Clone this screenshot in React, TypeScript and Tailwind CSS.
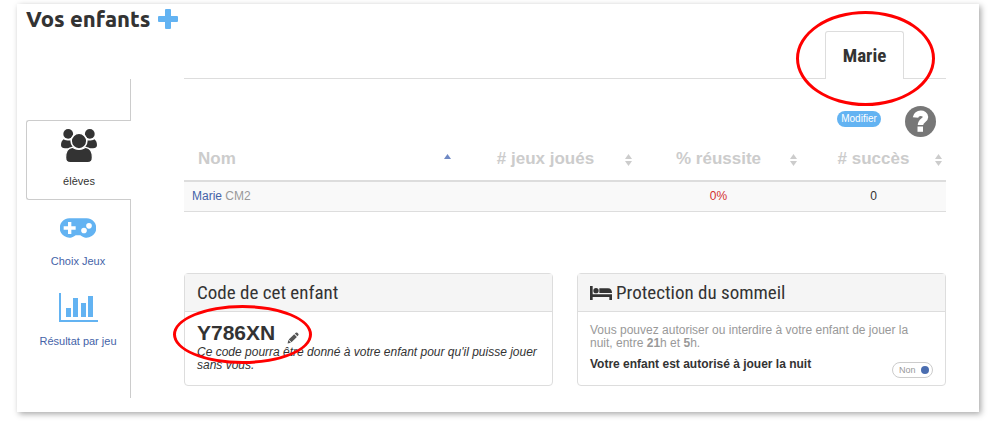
import type { ReactNode } from "react";

const CONDENSED = "font-['Roboto_Condensed','Liberation_Sans_Narrow',sans-serif]";

function UsersIcon() {
  return (
    <svg viewBox="0 0 110 104" className="w-9 h-[34px]" fill="currentColor" aria-hidden="true">
      <circle cx="22" cy="15" r="15" />
      <circle cx="88" cy="15" r="15" />
      <path d="M8 31C2 35 0 42 0 50c0 6 5 9 12 9h28V31c-10 6-22 6-32 0z" />
      <path d="M102 31c6 4 8 11 8 19 0 6-5 9-12 9H70V31c10 6 22 6 32 0z" />
      <path
        d="M34 56c-13 2-20 15-20 31 0 10 5 16 14 16h54c9 0 14-6 14-16 0-16-7-29-20-31-12 8-30 8-42 0z"
        stroke="#fff"
        strokeWidth="4"
      />
      <circle cx="55" cy="37" r="24" stroke="#fff" strokeWidth="5" />
    </svg>
  );
}

function GamepadIcon() {
  return (
    <svg viewBox="0 0 108 58" className="w-9 h-5" fill="currentColor" aria-hidden="true">
      <path
        fillRule="evenodd"
        d="M29 0h50a29 29 0 1 1-18 51H47A29 29 0 1 1 29 0zM24 11v13H11v10h13v13h10V34h13V24H34V11zM72 28a8.500 8.500 0 1 0 0 17 8.500 8.500 0 0 0 0-17zM87 14a8.500 8.500 0 1 0 0 17 8.500 8.500 0 0 0 0-17z"
      />
    </svg>
  );
}

function ChartIcon() {
  return (
    <svg viewBox="0 0 39 30" className="w-[39px] h-[30px]" fill="currentColor" aria-hidden="true">
      <path d="M0 0h2v27h37v2H0zM7 15h5v9H7zM14 5h5v19h-5zM22 10h5v14h-5zM29 3h5v21h-5z" />
    </svg>
  );
}

function BedIcon() {
  return (
    <svg viewBox="0 0 66 42" className="w-[22px] h-[14px]" fill="currentColor" aria-hidden="true">
      <path d="M0 0h8v25h58v17h-8v-9H8v9H0zM28 21V7h26c8 0 12 5 12 14z" />
      <circle cx="18" cy="14" r="8" />
    </svg>
  );
}

function PencilIcon() {
  return (
    <svg viewBox="0 0 12 12" className="w-3 h-3" fill="#555" aria-hidden="true">
      <path d="M7.800 1.600 8.800.8q.8-.7 1.600 0l.9.9q.7.8 0 1.600l-.9 1zM7.200 2.200l2.700 2.700-5.400 5.400-2.800-2.700zM1.300 8.100l2.600 2.600L.6 11.500z" />
    </svg>
  );
}

function SortIcon({ active = false }: { active?: boolean }) {
  return (
    <svg viewBox="0 0 7 12" className="w-[7px] h-3 shrink-0" aria-hidden="true">
      <path d="M0 5 3.500 0 7 5z" fill={active ? "#6f89c4" : "#ccc"} />
      {!active && <path d="M0 7h7l-3.500 5z" fill="#ccc" />}
    </svg>
  );
}

function SideLink({ icon, label }: { icon: ReactNode; label: string }) {
  return (
    <a href="#" className="flex flex-col items-center h-20 pt-3 text-[#63b3f2]">
      <span className="h-8 flex items-center">{icon}</span>
      <span className="mt-[9px] text-[11px] leading-4 text-[#4563a8] whitespace-nowrap">{label}</span>
    </a>
  );
}

function Panel({ title, children }: { title: ReactNode; children: ReactNode }) {
  return (
    <section className="flex-1 border border-[#ddd] rounded-[4px]">
      <h2
        className={`flex items-center gap-1 h-[38px] pt-[2px] px-3 bg-[#f5f5f5] border-b border-[#ddd] text-[19px] text-[#333] ${CONDENSED}`}
      >
        {title}
      </h2>
      {children}
    </section>
  );
}

const columns = [
  { label: "# jeux joués", width: "w-[181px]" },
  { label: "% réussite", width: "w-[165px]" },
  { label: "# succès", width: "w-[145px]" },
];

export default function App() {
  return (
    <div className="pt-1 pb-3 pl-[17px] pr-[21px] bg-white">
      <main className="pl-[9px] pr-[33px] pb-[14px] bg-white shadow-[2px_2px_6px_rgba(0,0,0,0.35)] font-['Liberation_Sans',Arial,sans-serif] text-xs text-[#333]">
        <h1 className="flex items-center gap-2 h-[27px] pt-[3px] font-['Ubuntu','Open_Sans',sans-serif] text-[22px] leading-6 font-black">
          Vos enfants
          <button type="button" aria-label="Ajouter un enfant" className="text-[#63b3f2]">
            <svg viewBox="0 0 20 20" className="w-5 h-5" fill="currentColor" aria-hidden="true">
              <path d="M8 0h4q1 0 1 1v6h6q1 0 1 1v4q0 1-1 1h-6v6q0 1-1 1H8q-1 0-1-1v-6H1q-1 0-1-1V8q0-1 1-1h6V1q0-1 1-1z" />
            </svg>
          </button>
        </h1>

        <div className="flex">
          <nav className="w-[105px] shrink-0 mt-12 mr-[53px] flex flex-col">
            <div className="h-[41px] border-r border-[#ccc]" />
            <a
              href="#"
              className="flex flex-col items-center h-20 pt-2 border border-r-0 border-[#ccc] rounded-l-[3px]"
            >
              <UsersIcon />
              <span className="mt-[10px] text-[11px] leading-4">élèves</span>
            </a>
            <div className="flex-1 border-r border-[#ccc]">
              <SideLink icon={<GamepadIcon />} label="Choix Jeux" />
              <SideLink icon={<ChartIcon />} label="Résultat par jeu" />
            </div>
          </nav>

          <div className="flex-1 pb-3">
            <div role="tablist" className="flex justify-end pr-[42px] border-b border-[#ddd]">
              <button
                type="button"
                role="tab"
                aria-selected="true"
                className={`relative w-[79px] h-12 -mb-px bg-white border border-b-0 border-[#ddd] rounded-t-[3px] text-[19px] font-bold ${CONDENSED}`}
              >
                Marie
                <span className="absolute -left-[30px] -top-[21px] w-[139px] h-[95px] border-[3px] border-[#f00] rounded-[50%] pointer-events-none" />
              </button>
            </div>

            <div className="flex items-start justify-end gap-6 pt-[27px] pr-[10px]">
              <button
                type="button"
                className="w-11 h-4 mt-[5px] rounded-full bg-[#63b3f2] text-[10px] leading-4 text-white"
              >
                Modifier
              </button>
              <button type="button" aria-label="Aide">
                <svg viewBox="0 0 31 31" className="w-[31px] h-[31px]" aria-hidden="true">
                  <circle cx="15.500" cy="15.500" r="15.500" fill="#777" />
                  <path
                    d="M10.500 11.500C11 6 20.500 6 20.500 11c0 3.500-5 3.500-5 8"
                    fill="none"
                    stroke="#fff"
                    strokeWidth="5.500"
                  />
                  <path d="M12.500 20.500H18v5.300h-5.500z" fill="#fff" />
                </svg>
              </button>
            </div>

            <table className="w-full table-fixed border-collapse">
              <thead>
                <tr className="h-11 text-[17px] text-[#ccc] border-b-2 border-[#ddd]">
                  <th className="pt-[2px] font-bold">
                    <button type="button" className="w-full flex items-center justify-between pl-[14px] pr-1">
                      Nom
                      <SortIcon active />
                    </button>
                  </th>
                  {columns.map((column) => (
                    <th key={column.label} className={`pt-[2px] font-bold ${column.width}`}>
                      <button type="button" className="w-full flex items-center pl-[11px] pr-1">
                        <span className="flex-1">{column.label}</span>
                        <SortIcon />
                      </button>
                    </th>
                  ))}
                </tr>
              </thead>
              <tbody>
                <tr className="h-[30px] bg-[#f9f9f9] border-b border-[#ddd]">
                  <td className="px-2 text-[#999]">
                    <a href="#" className="text-[#4563a8]">Marie</a> CM2
                  </td>
                  <td />
                  <td className="text-center text-[#d32f2f]">0%</td>
                  <td className="text-center">0</td>
                </tr>
              </tbody>
            </table>

            <div className="flex gap-6 mt-[61px]">
              <Panel title="Code de cet enfant">
                <div className="px-3 pt-2 pb-3">
                  <div className="relative flex items-end gap-3">
                    <strong className="text-[21px] leading-[26px]">Y786XN</strong>
                    <button type="button" aria-label="Modifier le code" className="pb-[2px]">
                      <PencilIcon />
                    </button>
                    <span className="absolute -left-[24px] -top-[15px] w-[139px] h-[59px] border-[3px] border-[#f00] rounded-[50%] pointer-events-none" />
                  </div>
                  <p className="italic leading-[13px]">
                    Ce code pourra être donné à votre enfant pour qu'il puisse jouer sans vous.
                  </p>
                </div>
              </Panel>

              <Panel
                title={
                  <>
                    <BedIcon />
                    Protection du sommeil
                  </>
                }
              >
                <div className="px-3 pt-3 pb-[7px]">
                  <p className="leading-[13px] text-[#999]">
                    Vous pouvez autoriser ou interdire à votre enfant de jouer la nuit, entre{" "}
                    <strong>21</strong>h et <strong>5</strong>h.
                  </p>
                  <div className="flex justify-between mt-2">
                    <strong className="leading-[13px]">Votre enfant est autorisé à jouer la nuit</strong>
                    <button
                      type="button"
                      role="switch"
                      aria-checked="false"
                      aria-label="Jouer la nuit"
                      className="flex items-center justify-between w-[41px] h-4 mt-1 pl-[6px] pr-[3px] border border-[#ccc] rounded-full text-[9px] leading-[14px] text-[#999]"
                    >
                      Non
                      <span className="w-2 h-2 rounded-full bg-[#4a6db0]" />
                    </button>
                  </div>
                </div>
              </Panel>
            </div>
          </div>
        </div>
      </main>
    </div>
  );
}
